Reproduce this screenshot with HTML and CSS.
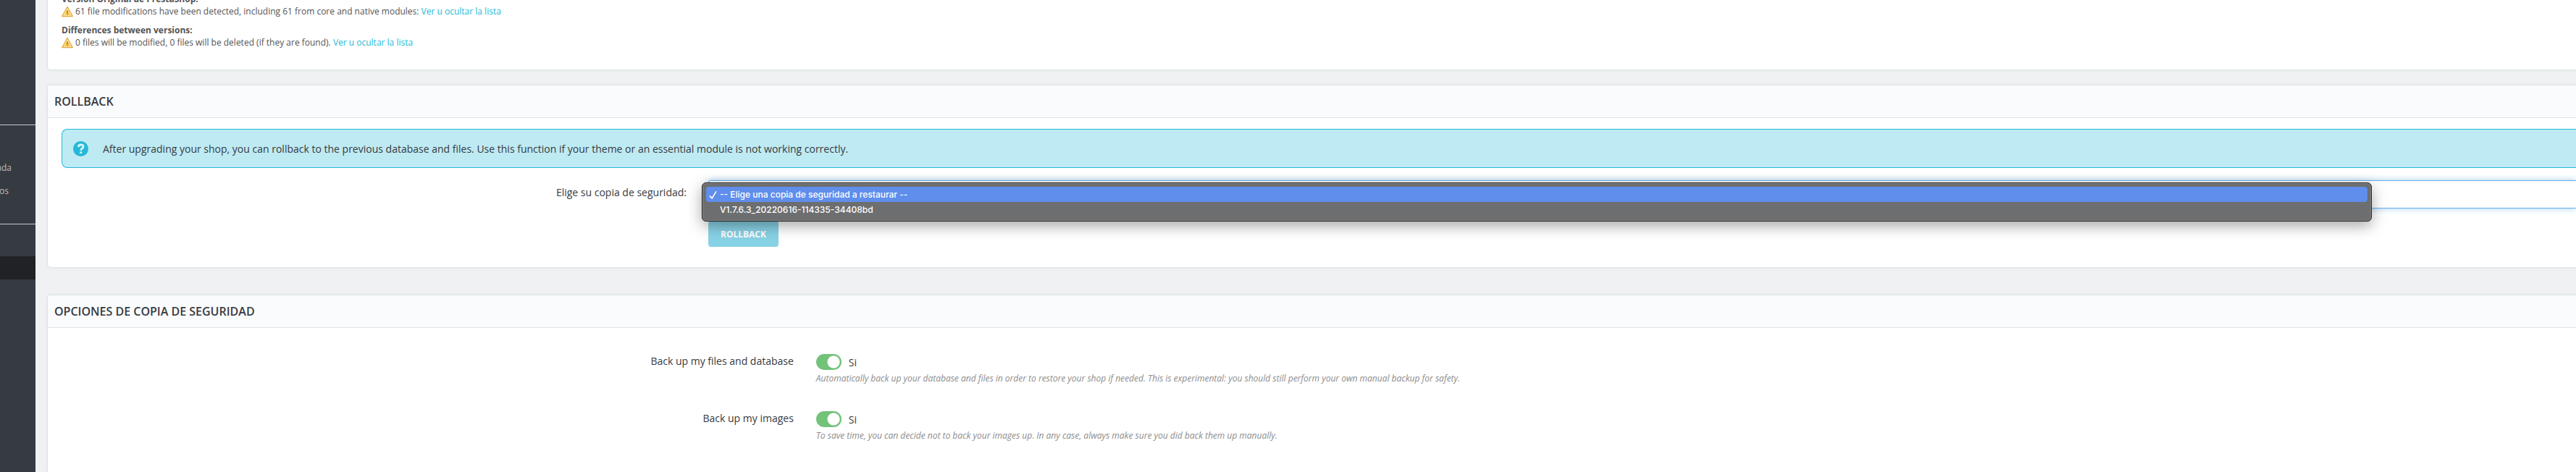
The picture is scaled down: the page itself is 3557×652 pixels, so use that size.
FILE: index.html
```
<!DOCTYPE html>
<html lang="es">
<head>
	<meta charset="utf-8">
	<title>1-Click Upgrade</title>
	<link rel="stylesheet" href="styles.css">
</head>
<body>

<nav class="sidebar">
	<ul class="menu">
		<li class="menu-item"><a href="#">nda</a></li>
		<li class="menu-item short"><a href="#">os</a></li>
	</ul>
	<ul class="menu modules">
		<li class="menu-item active"><a href="#" aria-label="Módulos"></a></li>
	</ul>
</nav>

<main class="content">
	<section class="panel versions">
		<p><b>Versión Original de PrestaShop:</b></p>
		<p class="warn">
			<svg class="icon-warn" viewBox="0 0 16 16"><path d="M8 1.5 15.2 14.5H.8z" fill="#fff6d8" stroke="#e3a53c" stroke-width="1.4" stroke-linejoin="round"/><path d="M8 4.5 12.7 13H3.3z" fill="#f7cf4b"/><path d="M7.2 6.5h1.6v3.4H7.2zM7.2 10.7h1.6v1.4H7.2z" fill="#a8741a"/></svg>
			<span>61 file modifications have been detected, including 61 from core and native modules: <a href="#">Ver u ocultar la lista</a></span>
		</p>
		<p class="differences"><b>Differences between versions:</b></p>
		<p class="warn">
			<svg class="icon-warn" viewBox="0 0 16 16"><path d="M8 1.5 15.2 14.5H.8z" fill="#fff6d8" stroke="#e3a53c" stroke-width="1.4" stroke-linejoin="round"/><path d="M8 4.5 12.7 13H3.3z" fill="#f7cf4b"/><path d="M7.2 6.5h1.6v3.4H7.2zM7.2 10.7h1.6v1.4H7.2z" fill="#a8741a"/></svg>
			<span>0 files will be modified, 0 files will be deleted (if they are found). <a href="#">Ver u ocultar la lista</a></span>
		</p>
	</section>

	<section class="panel rollback">
		<h3 class="panel-heading">ROLLBACK</h3>
		<div class="panel-body">
			<div class="alert">
				<svg class="icon-help" viewBox="0 0 20 20"><circle cx="10" cy="10" r="10" fill="#25b9d7"/><path d="M6.8 7.6C7 5.6 8.300 4.700 10.100 4.700c1.900 0 3.200 1.100 3.200 2.600 0 2.300-3.100 2.300-3.100 4.900" fill="none" stroke="#d8f3f8" stroke-width="2.800"/><rect x="8.800" y="13.600" width="2.800" height="2.600" fill="#d8f3f8"/></svg>
				<span>After upgrading your shop, you can rollback to the previous database and files. Use this function if your theme or an essential module is not working correctly.</span>
			</div>
			<div class="form-row">
				<label class="form-label" for="restore">Elige su copia de seguridad:</label>
				<div class="form-field">
					<select class="restore" id="restore">
						<option></option>
					</select>
					<ul class="dropdown">
						<li class="selected"><svg class="check" viewBox="0 0 12 14"><path d="M1.500 8.500 4.500 12 10.500 2" fill="none" stroke="#fff" stroke-width="1.800" stroke-linecap="round" stroke-linejoin="round"/></svg>-- Elige una copia de seguridad a restaurar --</li>
						<li>V1.7.6.3_20220616-114335-34408bd</li>
					</ul>
					<button class="btn" type="button">ROLLBACK</button>
				</div>
			</div>
		</div>
	</section>

	<section class="panel options">
		<h3 class="panel-heading">OPCIONES DE COPIA DE SEGURIDAD</h3>
		<div class="option">
			<label class="option-label" for="backup-files">Back up my files and database</label>
			<div>
				<div class="switch"><input type="checkbox" id="backup-files" checked><span>Si</span></div>
				<p class="help">Automatically back up your database and files in order to restore your shop if needed. This is experimental: you should still perform your own manual backup for safety.</p>
			</div>
		</div>
		<div class="option">
			<label class="option-label" for="backup-images">Back up my images</label>
			<div>
				<div class="switch"><input type="checkbox" id="backup-images" checked><span>Si</span></div>
				<p class="help">To save time, you can decide not to back your images up. In any case, always make sure you did back them up manually.</p>
			</div>
		</div>
	</section>
</main>

</body>
</html>
```

FILE: styles.css
```
* {box-sizing: border-box;}
body {
	margin: 0;
	display: flex;
	min-height: 100vh;
	background: #eff1f2;
	color: #363a41;
	font-family: "Open Sans", sans-serif;
	font-size: 14px;
}
p, h3, ul {margin: 0; padding: 0;}
ul {list-style: none;}
a {color: #25b9d7; text-decoration: none;}

/* sidebar */
.sidebar {flex: none; width: 49px; padding-top: 172px; background: #363a41;}
.menu {height: 137px; padding-top: 43px; border-top: 1px solid #bbcdd2;}
.menu-item {display: flex; justify-content: flex-end; height: 32px; padding-right: 33px; overflow: hidden; line-height: 32px; font-size: 12px;}
.menu-item.short {padding-right: 37px;}
.menu-item a {color: #bebebe;}
.modules {padding-top: 44px;}
.menu-item.active {background: #202226;}

/* panels */
.content {display: flex; flex-direction: column; flex: 1; min-width: 0; padding-left: 16px;}
.panel {
	background: #fff;
	border: 1px solid #dbe6e9;
	border-right: 0;
	border-radius: 5px 0 0 5px;
	box-shadow: 0 0 4px 0 rgba(0,0,0,.06);
}
.panel-heading {
	height: 45px;
	padding-left: 9px;
	background: #fafbfc;
	border-bottom: 1px solid #dbe6e9;
	border-radius: 5px 0 0 0;
	line-height: 44px;
	font-size: 16px;
	font-weight: 600;
}
.versions {margin-top: -11px; padding: 0 0 29px 19px; color: #555; font-size: 12px; line-height: 17px;}
.differences {margin-top: 9px;}
.warn {display: flex; align-items: center;}
.icon-warn {width: 16px; height: 16px; margin-right: 3px;}

/* rollback */
.rollback {margin-top: 20px; padding-bottom: 28px;}
.panel-body {padding: 15px 0 0 19px;}
.alert {
	display: flex;
	align-items: center;
	height: 54px;
	padding-left: 15px;
	background: #beeaf3;
	border: 1px solid #25b9d7;
	border-right: 0;
	border-radius: 8px 0 0 8px;
}
.icon-help {width: 21px; height: 21px; margin-right: 20px;}
.form-row {display: flex; gap: 30px; margin-top: 17px;}
.form-label {flex: none; width: calc(25% - 5px); line-height: 34px; text-align: right;}
.form-field {position: relative; flex: 1;}
.restore {
	display: block;
	width: 100%;
	height: 39px;
	background: #fff;
	border: 1px solid #66afe9;
	border-right: 0;
	border-radius: 4px 0 0 4px;
	box-shadow: 0 0 8px rgba(102,175,233,.6);
	appearance: none;
}
.dropdown {
	position: absolute;
	top: 3px;
	left: -9px;
	right: 282px;
	height: 54px;
	padding: 5px;
	background: #6d6e70;
	border: 1px solid #1e1e1e;
	border-radius: 6px;
	box-shadow: inset 0 0 0 1px #8a8a8a, 0 6px 20px rgba(0,0,0,.35);
	color: #fff;
	font-family: Inter, sans-serif;
	font-size: 12px;
	font-weight: 500;
}
.dropdown li {position: relative; height: 21px; padding-left: 19px; border-radius: 4px; line-height: 21px;}
.dropdown .selected {background: #5f8eec;}
.check {position: absolute; left: 4px; top: 5px; width: 11px; height: 13px;}
.btn {
	display: block;
	height: 36px;
	margin-top: 17px;
	padding: 0 17px;
	background: #88d2e5;
	border: 0;
	border-radius: 4px;
	color: #fff;
	font-family: inherit;
	font-size: 12px;
	font-weight: 700;
}

/* backup options */
.options {flex: 1; margin-top: 37px; border-bottom: 0; border-radius: 5px 0 0 0;}
.option {display: flex; gap: 31px; height: 79px;}
.panel-heading + .option {margin-top: 35px;}
.option-label {flex: none; width: 29.5%; line-height: 22px; text-align: right;}
.switch {display: flex; gap: 10px; align-items: center; height: 24px;}
.switch input {
	width: 35px;
	height: 22px;
	margin: 0;
	background: radial-gradient(circle at 24px 11px, #fff 8px, #72c279 9px);
	border-radius: 11px;
	appearance: none;
}
.help {color: #8c8c8c; font-size: 12px; font-style: italic; line-height: 22px;}
```
